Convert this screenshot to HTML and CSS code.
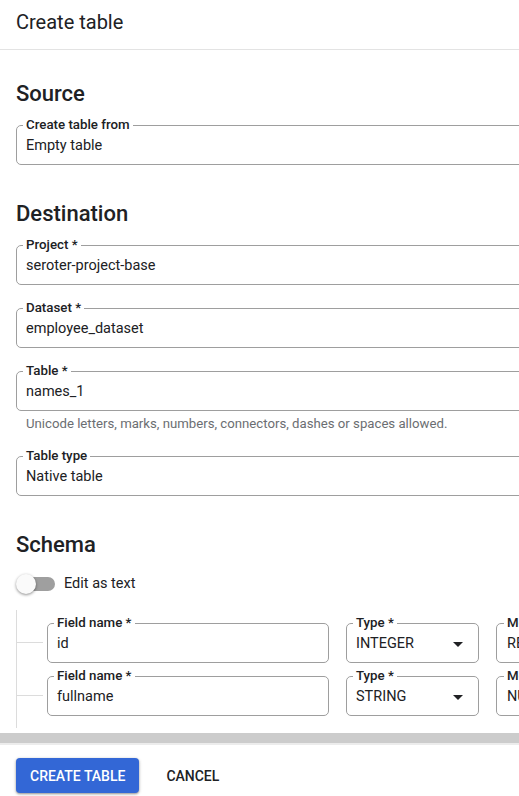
FILE: index.html
```html
<!DOCTYPE html>
<html lang="en">
<head>
<meta charset="utf-8">
<title>Create table</title>
<link rel="stylesheet" href="styles.css">
</head>
<body>
<div class="page">
  <header class="header">
    <h1 class="title">Create table</h1>
  </header>

  <main class="content">
    <section class="section section-first">
      <h2 class="section-title">Source</h2>
      <fieldset class="field field-wide">
        <legend class="field-label">Create table from</legend>
        <div class="field-value">Empty table</div>
      </fieldset>
    </section>

    <section class="section">
      <h2 class="section-title">Destination</h2>
      <div class="field-stack">
        <fieldset class="field field-wide">
          <legend class="field-label">Project *</legend>
          <div class="field-value">seroter-project-base</div>
        </fieldset>
        <fieldset class="field field-wide">
          <legend class="field-label">Dataset *</legend>
          <div class="field-value">employee_dataset</div>
        </fieldset>
        <div class="field-group">
          <fieldset class="field field-wide">
            <legend class="field-label">Table *</legend>
            <div class="field-value">names_1</div>
          </fieldset>
          <p class="hint">Unicode letters, marks, numbers, connectors, dashes or spaces allowed.</p>
        </div>
        <fieldset class="field field-wide">
          <legend class="field-label">Table type</legend>
          <div class="field-value">Native table</div>
        </fieldset>
      </div>
    </section>

    <section class="section">
      <h2 class="section-title">Schema</h2>
      <div class="toggle-row">
        <span class="switch">
          <span class="switch-track"></span>
          <span class="switch-thumb"></span>
        </span>
        <span class="toggle-label">Edit as text</span>
      </div>

      <div class="tree">
        <div class="schema-row">
          <span class="connector"></span>
          <fieldset class="field field-name">
            <legend class="field-label">Field name *</legend>
            <div class="field-value">id</div>
          </fieldset>
          <fieldset class="field field-type">
            <legend class="field-label">Type *</legend>
            <div class="field-value select-value">INTEGER
              <svg class="caret" width="10" height="5" viewBox="0 0 10 5"><polygon points="0,0 10,0 5,5" fill="#202124"/></svg>
            </div>
          </fieldset>
          <fieldset class="field field-mode">
            <legend class="field-label">Mode *</legend>
            <div class="field-value">REQUIRED</div>
          </fieldset>
        </div>
        <div class="schema-row">
          <span class="connector"></span>
          <fieldset class="field field-name">
            <legend class="field-label">Field name *</legend>
            <div class="field-value">fullname</div>
          </fieldset>
          <fieldset class="field field-type">
            <legend class="field-label">Type *</legend>
            <div class="field-value select-value">STRING
              <svg class="caret" width="10" height="5" viewBox="0 0 10 5"><polygon points="0,0 10,0 5,5" fill="#202124"/></svg>
            </div>
          </fieldset>
          <fieldset class="field field-mode">
            <legend class="field-label">Mode *</legend>
            <div class="field-value">NULLABLE</div>
          </fieldset>
        </div>
      </div>
    </section>
  </main>

  <div class="hscroll"></div>

  <footer class="footer">
    <button class="btn btn-primary" type="button">CREATE TABLE</button>
    <button class="btn btn-text" type="button">CANCEL</button>
  </footer>
</div>
</body>
</html>
```

FILE: styles.css
```css
html, body {
  margin: 0;
  padding: 0;
  background: #fff;
}

body {
  width: 519px;
  height: 796px;
  overflow: hidden;
  font-family: Roboto, "Noto Sans", "Liberation Sans", sans-serif;
  color: #202124;
}

.page {
  display: flex;
  flex-direction: column;
  height: 796px;
}

.header {
  padding: 10px 16px 15px;
  border-bottom: 1px solid #e3e3e3;
}

.title {
  margin: 0;
  font-size: 20px;
  line-height: 24px;
  font-weight: 400;
}

.content {
  padding: 0 0 0 16px;
}

.section {
  margin-top: 35px;
}

.section-first {
  margin-top: 30px;
}

.section-title {
  margin: 0 0 9px;
  font-size: 22px;
  line-height: 28px;
  font-weight: 500;
}

.field-stack {
  display: flex;
  flex-direction: column;
  gap: 15px;
}

.field-group {
  display: flex;
  flex-direction: column;
  gap: 5px;
  margin-bottom: 1px;
}

.field {
  margin: 0;
  min-width: 0;
  box-sizing: border-box;
  padding: 3px 9px 8px;
  border: 1px solid #9e9e9e;
  border-radius: 5px;
}

.field-wide {
  width: 580px;
}

.field-label {
  padding: 0 3px;
  margin-left: -3px;
  font-size: 13.3px;
  line-height: 16px;
  font-weight: 500;
  color: #202124;
}

.field-value {
  font-size: 14.5px;
  line-height: 20px;
  white-space: nowrap;
}

.hint {
  margin: 0;
  padding-left: 10px;
  font-size: 13.2px;
  line-height: 16px;
  color: #6b6e72;
  white-space: nowrap;
}

.toggle-row {
  display: flex;
  align-items: center;
  gap: 8px;
  margin-top: 15px;
  height: 20px;
}

.switch {
  position: relative;
  width: 40px;
  height: 20px;
  flex: none;
}

.switch-track {
  position: absolute;
  left: 4px;
  top: 3px;
  width: 35px;
  height: 14px;
  border-radius: 7px;
  background: #9f9f9f;
}

.switch-thumb {
  position: absolute;
  left: 0;
  top: 0;
  width: 20px;
  height: 20px;
  border-radius: 50%;
  background: #fafafa;
  box-shadow: 0 1px 3px rgba(0, 0, 0, 0.45);
}

.toggle-label {
  font-size: 14.5px;
  line-height: 20px;
}

.tree {
  margin-top: 16px;
  border-left: 1px solid #dcdcdc;
  padding: 5px 0 12px;
  display: flex;
  flex-direction: column;
  gap: 5px;
}

.schema-row {
  display: flex;
  align-items: flex-start;
}

.connector {
  flex: none;
  width: 26px;
  height: 1px;
  margin-top: 27px;
  margin-right: 4px;
  background: #dcdcdc;
}

.field-name {
  flex: none;
  width: 282px;
  margin-right: 17px;
}

.field-type {
  flex: none;
  width: 133px;
  margin-right: 17px;
  padding-right: 15px;
}

.field-mode {
  flex: none;
  width: 140px;
  padding-left: 10px;
}

.select-value {
  display: flex;
  align-items: center;
  justify-content: space-between;
}

.caret {
  display: block;
}

.hscroll {
  margin-top: 5px;
  height: 10px;
  background: #cccccc;
  border-bottom: 2px solid #ececec;
}

.footer {
  display: flex;
  align-items: center;
  padding: 13px 16px 0;
}

.btn {
  font-family: Roboto, "Noto Sans", "Liberation Sans", sans-serif;
  font-size: 14px;
  font-weight: 500;
  height: 35px;
  border: none;
  cursor: pointer;
}

.btn-primary {
  padding: 0 14px;
  background: #3367d6;
  color: #fff;
  border-radius: 4px;
  box-shadow: 0 1px 2px rgba(0, 0, 0, 0.3), 0 1px 3px 1px rgba(0, 0, 0, 0.12);
}

.btn-text {
  margin-left: 15px;
  padding: 0 12px;
  background: transparent;
  color: #202124;
}
```
